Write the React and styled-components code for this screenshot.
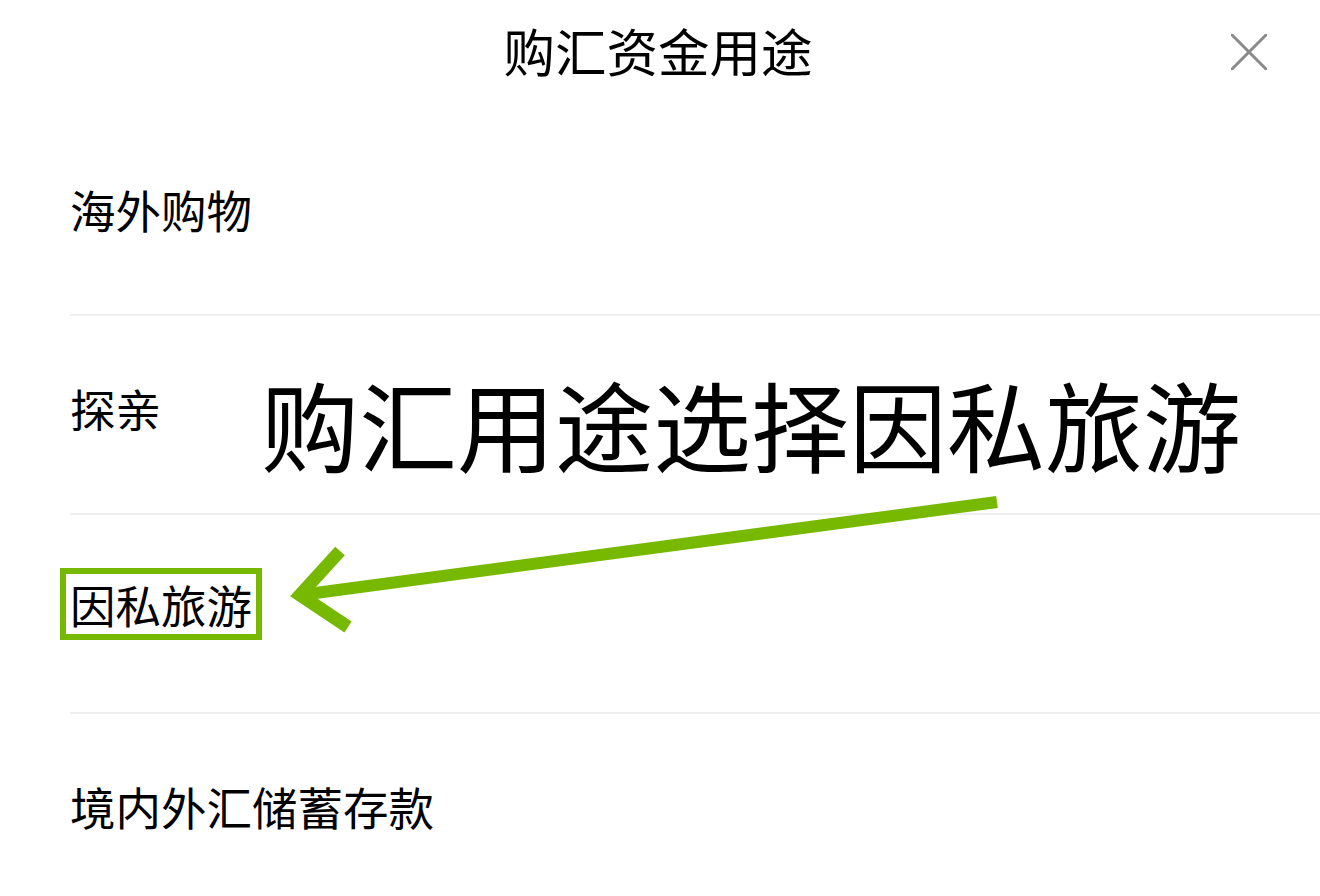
import React from "react";
import styled, { createGlobalStyle } from "styled-components";

const Global = createGlobalStyle`
  html, body { margin: 0; padding: 0; background: #fff; }
  body { font-family: "Noto Sans CJK SC", "Noto Sans", sans-serif; color: #000; }
  * { box-sizing: border-box; }
`;

const Page = styled.div`
  position: relative;
  width: 1320px;
  height: 896px;
  overflow: hidden;
  background: #fff;
`;

const Header = styled.div`
  position: relative;
  height: 106px;
  display: flex;
  align-items: center;
  justify-content: center;
  padding-bottom: 6px;
`;

const Title = styled.h1`
  margin: 0 0 0 -4px;
  font-size: 51.5px;
  font-weight: 400;
  line-height: 1;
`;

const CloseButton = styled.button`
  position: absolute;
  right: 53px;
  top: 34px;
  width: 36px;
  height: 36px;
  padding: 0;
  border: 0;
  background: transparent;
  display: flex;
  align-items: center;
  justify-content: center;
`;

const List = styled.ul`
  list-style: none;
  margin: 0;
  padding: 11px 0 0 70px;
`;

const Row = styled.li`
  height: 199px;
  display: flex;
  align-items: center;
  border-bottom: 2px solid ${(p) => (p.$last ? "transparent" : "#efefef")};
`;

const Label = styled.span`
  display: inline-block;
  font-size: 45.5px;
  line-height: 60px;
  margin-top: -13px;
  ${(p) =>
    p.$highlight
      ? `border: 6px solid #76b900; padding: 0 4px; margin-left: -10px; margin-top: -19px;`
      : ``}
`;

const Annotation = styled.div`
  position: absolute;
  left: 261px;
  top: 369px;
  font-size: 98px;
  line-height: 1.1;
  white-space: nowrap;
  color: #000;
`;

const ArrowLayer = styled.svg`
  position: absolute;
  left: 0;
  top: 0;
  pointer-events: none;
`;

const items = ["海外购物", "探亲", "因私旅游", "境内外汇储蓄存款"];

export default function App() {
  return (
    <Page>
      <Global />
      <Header>
        <Title>购汇资金用途</Title>
        <CloseButton aria-label="关闭">
          <svg width="36" height="36" viewBox="0 0 36 36">
            <path d="M1 1 L35 35 M35 1 L1 35" stroke="#8a8a8a" strokeWidth="3" strokeLinecap="round" />
          </svg>
        </CloseButton>
      </Header>
      <List>
        {items.map((t, i) => (
          <Row key={t} $last={i === items.length - 1}>
            <Label $highlight={t === "因私旅游"}>{t}</Label>
          </Row>
        ))}
      </List>
      <Annotation>购汇用途选择因私旅游</Annotation>
      <ArrowLayer width="1320" height="896" viewBox="0 0 1320 896">
        <path d="M997 502 L308 594" stroke="#76b900" strokeWidth="12" fill="none" />
        <path d="M340 551 L300 595 L348 627" stroke="#76b900" strokeWidth="13" fill="none" strokeLinejoin="miter" />
      </ArrowLayer>
    </Page>
  );
}
